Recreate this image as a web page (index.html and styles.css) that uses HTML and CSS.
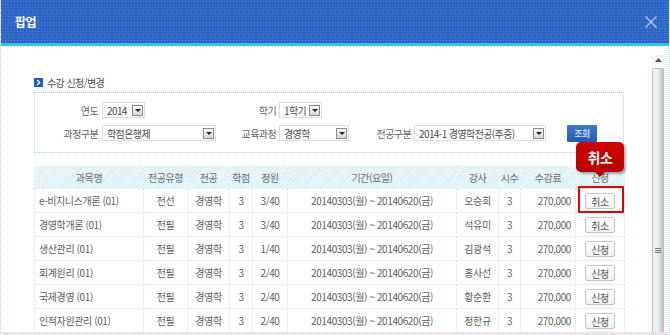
FILE: index.html
```html
<!DOCTYPE html>
<html lang="ko">
<head>
<meta charset="utf-8">
<title>팝업</title>
<link rel="stylesheet" href="styles.css">
</head>
<body>
<div class="popup">
  <div class="titlebar">
    <span class="title">팝업</span>
    <svg class="close" width="12" height="12" viewBox="0 0 12 12"><path d="M0.5 0.5 L11.5 11.5 M11.5 0.5 L0.5 11.5" stroke="#bcd0f2" stroke-width="1.2" fill="none"/></svg>
  </div>
  <div class="main">
    <div class="content">
      <div class="section-title">
        <svg class="sec-icon" width="9" height="9" viewBox="0 0 9 9"><rect width="9" height="9" fill="#1d5cc0"/><path d="M3.2 2 L5.6 4.5 L3.2 7" stroke="#fff" stroke-width="1.5" fill="none"/></svg>
        <span>수강 신청/변경</span>
      </div>
      <div class="search">
        <div class="srow">
          <span class="lbl l1">연도</span>
          <span class="fcell c2"><span class="sel w43"><span class="val">2014</span><span class="arr"></span></span></span>
          <span class="lbl l3">학기</span>
          <span class="fcell c4"><span class="sel w43"><span class="val">1학기</span><span class="arr"></span></span></span>
        </div>
        <div class="srow">
          <span class="lbl l1">과정구분</span>
          <span class="fcell c2"><span class="sel w114"><span class="val">학점은행제</span><span class="arr"></span></span></span>
          <span class="lbl l3">교육과정</span>
          <span class="fcell c4"><span class="sel w70"><span class="val">경영학</span><span class="arr"></span></span></span>
          <span class="lbl l5">전공구분</span>
          <span class="fcell c6"><span class="sel w132"><span class="val">2014-1 경영학전공(주중)</span><span class="arr"></span></span></span>
          <span class="fcell c7"><span class="btn-search">조회</span></span>
        </div>
      </div>
      <table class="list">
        <colgroup>
          <col class="k1"><col class="k2"><col class="k3"><col class="k4"><col class="k5"><col class="k6"><col class="k7"><col class="k8"><col class="k9"><col class="k10">
        </colgroup>
        <thead>
          <tr><th>과목명</th><th>전공유형</th><th>전공</th><th>학점</th><th>정원</th><th>기간(요일)</th><th>강사</th><th>시수</th><th>수강료</th><th>신청</th></tr>
        </thead>
        <tbody>
          <tr><td class="name">e-비지니스개론 (01)</td><td>전선</td><td>경영학</td><td>3</td><td>3/40</td><td>20140303(월) ~ 20140620(금)</td><td>오승희</td><td>3</td><td class="fee">270,000</td><td><span class="btn">취소</span></td></tr>
          <tr><td class="name">경영학개론 (01)</td><td>전필</td><td>경영학</td><td>3</td><td>3/40</td><td>20140303(월) ~ 20140620(금)</td><td>석유미</td><td>3</td><td class="fee">270,000</td><td><span class="btn">취소</span></td></tr>
          <tr><td class="name">생산관리 (01)</td><td>전필</td><td>경영학</td><td>3</td><td>1/40</td><td>20140303(월) ~ 20140620(금)</td><td>김광석</td><td>3</td><td class="fee">270,000</td><td><span class="btn">신청</span></td></tr>
          <tr><td class="name">회계원리 (01)</td><td>전필</td><td>경영학</td><td>3</td><td>2/40</td><td>20140303(월) ~ 20140620(금)</td><td>홍사선</td><td>3</td><td class="fee">270,000</td><td><span class="btn">신청</span></td></tr>
          <tr><td class="name">국제경영 (01)</td><td>전필</td><td>경영학</td><td>3</td><td>2/40</td><td>20140303(월) ~ 20140620(금)</td><td>황순환</td><td>3</td><td class="fee">270,000</td><td><span class="btn">신청</span></td></tr>
          <tr><td class="name">인적자원관리 (01)</td><td>전필</td><td>경영학</td><td>3</td><td>2/40</td><td>20140303(월) ~ 20140620(금)</td><td>정한규</td><td>3</td><td class="fee">270,000</td><td><span class="btn">신청</span></td></tr>
        </tbody>
      </table>
    </div>
    <div class="scrollbar">
      <div class="sb-up"><svg width="7" height="4" viewBox="0 0 7 4"><path d="M0 4 L3.5 0 L7 4 Z" fill="#555"/></svg></div>
      <div class="sb-thumb"><span class="grip"></span></div>
    </div>
  </div>
  <div class="bottom-edge"></div>
  <div class="tooltip">취소</div>
  <div class="highlight"></div>
</div>
</body>
</html>
```

FILE: styles.css
```css
html, body {
  margin: 0;
  padding: 0;
  background: #fff;
}
body {
  width: 670px;
  height: 335px;
  overflow: hidden;
  font-family: "Noto Sans CJK KR", "Noto Sans", sans-serif;
}
.popup {
  position: relative;
  width: 670px;
  height: 335px;
  box-sizing: border-box;
  border-left: 1px dotted #a6dcec;
  border-right: 1px dotted #a6dcec;
  display: flex;
  flex-direction: column;
  overflow: hidden;
}
.titlebar {
  flex: none;
  height: 43px;
  border-bottom: 3px solid #36c4ee;
  background-color: #2f65c4;
  background-image: radial-gradient(circle, #4f86da 0.7px, transparent 0.9px);
  background-size: 3px 3px;
  display: flex;
  align-items: center;
  justify-content: space-between;
  padding: 0 12px 0 14px;
}
.title {
  color: #fff;
  font-size: 12px;
  font-weight: bold;
  letter-spacing: -0.5px;
}
.main {
  flex: 1;
  min-height: 0;
  display: flex;
}
.content {
  flex: none;
  width: 590px;
  padding: 30px 0 0 33px;
}
.section-title {
  height: 13px;
  display: flex;
  align-items: center;
  gap: 4px;
  font-size: 10px;
  color: #4a4a4a;
  letter-spacing: -0.6px;
  margin-bottom: 3px;
}
.sec-icon { flex: none; }
.search {
  border: 1px dotted #9ed6e8;
  padding: 9px 0 11px 0;
  display: flex;
  flex-direction: column;
  gap: 7px;
}
.srow {
  display: flex;
  height: 16px;
  align-items: center;
  font-size: 10px;
  color: #606060;
  letter-spacing: -0.6px;
}
.lbl { text-align: right; flex: none; }
.l1 { width: 63px; }
.l3 { width: 60px; }
.l5 { width: 62px; }
.fcell { flex: none; display: flex; }
.c2 { width: 114px; padding-left: 4px; }
.c4 { width: 70px; padding-left: 3px; }
.c6 { width: 132px; padding-left: 3px; }
.c7 { padding-left: 21px; }
.sel {
  box-sizing: border-box;
  height: 16px;
  border: 1px solid #dcdcdc;
  background: #fff;
  display: flex;
  align-items: center;
  justify-content: space-between;
  padding: 0 1px 0 4px;
  color: #4a4a4a;
}
.w43 { width: 43px; }
.w70 { width: 70px; }
.w114 { width: 114px; }
.w132 { width: 132px; }
.arr {
  position: relative;
  box-sizing: border-box;
  width: 11px;
  height: 11px;
  border: 1px solid #8a8a8a;
  background: linear-gradient(#fafafa, #d8d8d8);
  flex: none;
}
.arr::after {
  content: "";
  position: absolute;
  left: 2px;
  top: 3px;
  border-left: 3px solid transparent;
  border-right: 3px solid transparent;
  border-top: 3px solid #222;
}
.btn-search {
  box-sizing: border-box;
  width: 30px;
  height: 17px;
  background: linear-gradient(#3c7bd0, #2559b0);
  color: #fff;
  font-size: 9px;
  display: flex;
  align-items: center;
  justify-content: center;
  border-radius: 1px;
}
.list {
  margin-top: 13px;
  width: 590px;
  border-collapse: collapse;
  table-layout: fixed;
  font-size: 10px;
  color: #5c5c5c;
  letter-spacing: -0.4px;
}
.k1 { width: 109px; }
.k2 { width: 44px; }
.k3 { width: 42px; }
.k4 { width: 23px; }
.k5 { width: 35px; }
.k6 { width: 169px; }
.k7 { width: 42px; }
.k8 { width: 22px; }
.k9 { width: 55px; }
.k10 { width: 49px; }
.list th, .list td {
  border: 1px dotted #cce5ee;
  padding: 0;
  text-align: center;
  white-space: nowrap;
  overflow: hidden;
}
.list th {
  height: 21px;
  font-weight: normal;
  color: #6a6a6a;
  background: repeating-linear-gradient(-45deg, #d4ecf4 0 1px, #e9f6fa 1px 3px);
}
.list td { height: 23px; }
.list td.name { text-align: left; padding-left: 4px; }
.list td.fee { text-align: right; padding-right: 4px; }
.btn {
  display: inline-flex;
  box-sizing: border-box;
  width: 30px;
  height: 16px;
  align-items: center;
  justify-content: center;
  border: 1px solid #c4c4c4;
  border-radius: 2px;
  background: linear-gradient(#fff, #f2f2f2);
  color: #555;
  vertical-align: middle;
}
.scrollbar {
  flex: none;
  width: 12px;
  margin: 9px 0 0 28px;
  display: flex;
  flex-direction: column;
}
.sb-up {
  height: 9px;
  display: flex;
  align-items: center;
  justify-content: center;
  background: #f4f4f4;
}
.sb-thumb {
  flex: 1;
  margin-top: 4px;
  box-sizing: border-box;
  border: 1px solid #bdbdbd;
  border-bottom: none;
  border-radius: 2px 2px 0 0;
  background: linear-gradient(90deg, #e6f2f4, #eef6f7 40%, #d2d2d2 80%, #c2c2c2);
  display: flex;
  align-items: flex-start;
  justify-content: center;
  padding-top: 179px;
}
.grip {
  width: 6px;
  height: 5px;
  background: repeating-linear-gradient(#777 0 1px, transparent 1px 2px);
}
.bottom-edge {
  flex: none;
  height: 3px;
  background: repeating-linear-gradient(90deg, #f4d6dc 0 1px, #dff0f5 1px 2px);
}
.tooltip {
  position: absolute;
  left: 575px;
  top: 142px;
  width: 48px;
  height: 30px;
  box-sizing: border-box;
  border-radius: 5px;
  background: linear-gradient(#d20000, #b50000);
  color: #fff;
  font-size: 14px;
  font-weight: bold;
  display: flex;
  align-items: center;
  justify-content: center;
  box-shadow: 2px 2px 2px rgba(0,0,0,0.3);
  letter-spacing: -0.5px;
}
.tooltip::after {
  content: "";
  position: absolute;
  left: 19px;
  bottom: -5px;
  border-left: 5px solid transparent;
  border-right: 5px solid transparent;
  border-top: 5px solid #b50000;
}
.highlight {
  position: absolute;
  left: 577px;
  top: 186px;
  width: 46px;
  height: 27px;
  box-sizing: border-box;
  border: 2px solid #e40000;
}
```
